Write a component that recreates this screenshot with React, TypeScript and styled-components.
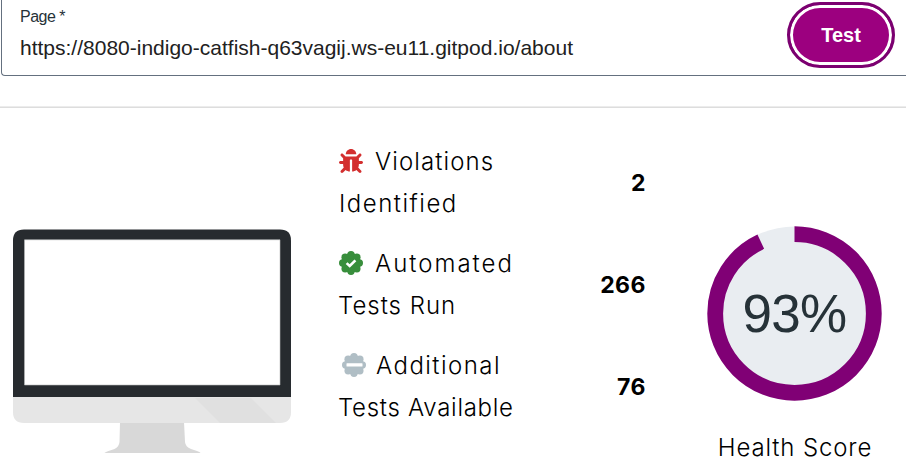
import React from 'react';
import styled, { createGlobalStyle } from 'styled-components';
import { FaBug } from 'react-icons/fa';

const GlobalStyle = createGlobalStyle`
  *, *::before, *::after { box-sizing: border-box; }
  body { margin: 0; background: #fff; overflow: hidden; }
`;

const Page = styled.main`
  width: 906px;
  height: 469px;
  overflow: hidden;
  background: #fff;
  color: #000;
  font-family: Inter, sans-serif;
`;

const UrlField = styled.section`
  display: flex;
  justify-content: space-between;
  height: 76px;
  margin-left: 1px;
  padding: 2px 11px 0 18px;
  border: solid #64707f;
  border-width: 0 0 1px 1px;
  border-bottom-left-radius: 4px;
  font-family: 'Liberation Sans', Arial, sans-serif;
`;

const FieldText = styled.div`
  display: flex;
  flex-direction: column;
`;

const FieldLabel = styled.label`
  margin-top: 6px;
  font-size: 16px;
  line-height: 18px;
  letter-spacing: -0.5px;
  color: #263238;
`;

const FieldValue = styled.span`
  margin-top: 9px;
  font-size: 21px;
  line-height: 26px;
  font-variant-ligatures: none;
  color: #212121;
`;

const TestButton = styled.button`
  width: 108px;
  height: 66px;
  padding: 0;
  border: 3px solid #7b0070;
  border-radius: 33px;
  background: #9c007f;
  box-shadow: inset 0 0 0 3px #fff;
  color: #fff;
  font: bold 20px 'Liberation Sans', Arial, sans-serif;
`;

const Divider = styled.hr`
  height: 2px;
  margin: 30px 0 0;
  border: 0;
  border-top: 1px solid #ececec;
  background: #dddddd;
`;

const Results = styled.section`
  display: grid;
  grid-template-columns: 339px 306px 261px;
  align-items: start;
`;

const MonitorArt = styled.svg`
  display: block;
  margin: 121px 0 0 13px;
`;

const Metrics = styled.div`
  display: flex;
  flex-direction: column;
  gap: 18px;
  padding-top: 33px;
`;

const Metric = styled.div`
  display: flex;
  align-items: center;
  justify-content: space-between;
`;

const MetricLine = styled.div<{ $spacing: number; $indent?: number }>`
  display: flex;
  align-items: center;
  height: 42px;
  margin-left: ${(p) => p.$indent ?? 0}px;
  font-size: 24px;
  font-weight: 300;
  line-height: 42px;
  white-space: pre;
  letter-spacing: ${(p) => p.$spacing}px;
`;

const IconSlot = styled.span<{ $color: string; $gap?: number }>`
  display: flex;
  width: 24px;
  height: 24px;
  margin: -2px ${(p) => p.$gap ?? 12}px 0 0;
  color: ${(p) => p.$color};
`;

const MetricValue = styled.strong`
  margin-right: -1px;
  font-size: 23px;
  font-weight: 700;
  line-height: 42px;
  letter-spacing: 0.5px;
`;

const Score = styled.div`
  display: flex;
  flex-direction: column;
  align-items: center;
  width: 175px;
  margin: 118px 0 0 62px;
`;

const Gauge = styled.div`
  display: grid;
  place-items: center;
  width: 175px;
  height: 175px;

  > * { grid-area: 1 / 1; }
`;

const GaugeValue = styled.span`
  font: 53px/60px 'Liberation Sans', Arial, sans-serif;
  letter-spacing: -0.7px;
  color: #263238;
`;

const ScoreLabel = styled.span`
  margin-top: 25px;
  padding-left: 1px;
  font-size: 24px;
  font-weight: 300;
  line-height: 44px;
  letter-spacing: 0.85px;
  white-space: nowrap;
`;

const lobes = Array.from({ length: 8 }, (_, i) => (i * Math.PI) / 4);

function Badge({ kind }: { kind: 'check' | 'minus' }) {
  return (
    <svg width="24" height="24" viewBox="0 0 24 24">
      <g fill="currentColor">
        <circle cx="12" cy="12" r="9.9" />
        {lobes.map((a) => (
          <circle key={a} cx={12 + 8.3 * Math.sin(a)} cy={12 - 8.3 * Math.cos(a)} r="3.7" />
        ))}
      </g>
      {kind === 'check' ? (
        <path d="M7.6 12.1l3.1 2.900 5.700-5.700" fill="none" stroke="#fff" strokeWidth="2.6" />
      ) : (
        <rect x="4.5" y="10.200" width="16" height="3.400" rx="0.6" fill="#fff" />
      )}
    </svg>
  );
}

function Monitor() {
  return (
    <MonitorArt width="278" height="225" viewBox="0 0 278 225">
      <path d="M107 193h64l1 20q.5 5 6 7l6 2q3 1 3.500 2H91.500q1-1 4-2l6-2q4.500-2 5-7z" fill="#d8d8d8" />
      <path d="M0 168h278v15q0 11-11 11H11q-11 0-11-11z" fill="#e6e6e6" />
      <path d="M182 169h56l25 25h-56z" fill="#e0e0e0" />
      <path d="M11 .5h256q11 0 11 11V168H0V11.500Q0 .5 11 .5z" fill="#272b2f" />
      <path d="M11.500 10.800h255.500v145.200H11.500z" fill="#fff" stroke="#b8baba" strokeWidth=".6" />
    </MonitorArt>
  );
}

export default function App() {
  return (
    <>
      <GlobalStyle />
      <Page>
        <UrlField>
          <FieldText>
            <FieldLabel>Page *</FieldLabel>
            <FieldValue>https://8080-indigo-catfish-q63vagij.ws-eu11.gitpod.io/about</FieldValue>
          </FieldText>
          <TestButton>Test</TestButton>
        </UrlField>
        <Divider />
        <Results>
          <Monitor />
          <Metrics>
            <Metric>
              <div>
                <MetricLine $spacing={1.1}>
                  <IconSlot $color="#d32f2f"><FaBug size={24} /></IconSlot>
                  Violations
                </MetricLine>
                <MetricLine $spacing={1.5}>Identified</MetricLine>
              </div>
              <MetricValue>2</MetricValue>
            </Metric>
            <Metric>
              <div>
                <MetricLine $spacing={2}>
                  <IconSlot $color="#388e3c"><Badge kind="check" /></IconSlot>
                  Automated
                </MetricLine>
                <MetricLine $spacing={1} $indent={-1}>Tests Run</MetricLine>
              </div>
              <MetricValue>266</MetricValue>
            </Metric>
            <Metric>
              <div>
                <MetricLine $spacing={1.45} $indent={3}>
                  <IconSlot $color="#b0bec5" $gap={10}><Badge kind="minus" /></IconSlot>
                  Additional
                </MetricLine>
                <MetricLine $spacing={0.72} $indent={-1}>Tests Available</MetricLine>
              </div>
              <MetricValue>76</MetricValue>
            </Metric>
          </Metrics>
          <Score>
            <Gauge>
              <svg width="175" height="175" viewBox="0 0 175 175">
                <circle cx="87.500" cy="87.500" r="87" fill="#e9edf1" />
                <circle
                  cx="87.500"
                  cy="87.500"
                  r="79.300"
                  fill="none"
                  stroke="#800075"
                  strokeWidth="15.800"
                  pathLength={100}
                  strokeDasharray="93 7"
                  transform="rotate(-90 87.500 87.500)"
                />
              </svg>
              <GaugeValue>93%</GaugeValue>
            </Gauge>
            <ScoreLabel>Health Score</ScoreLabel>
          </Score>
        </Results>
      </Page>
    </>
  );
}
